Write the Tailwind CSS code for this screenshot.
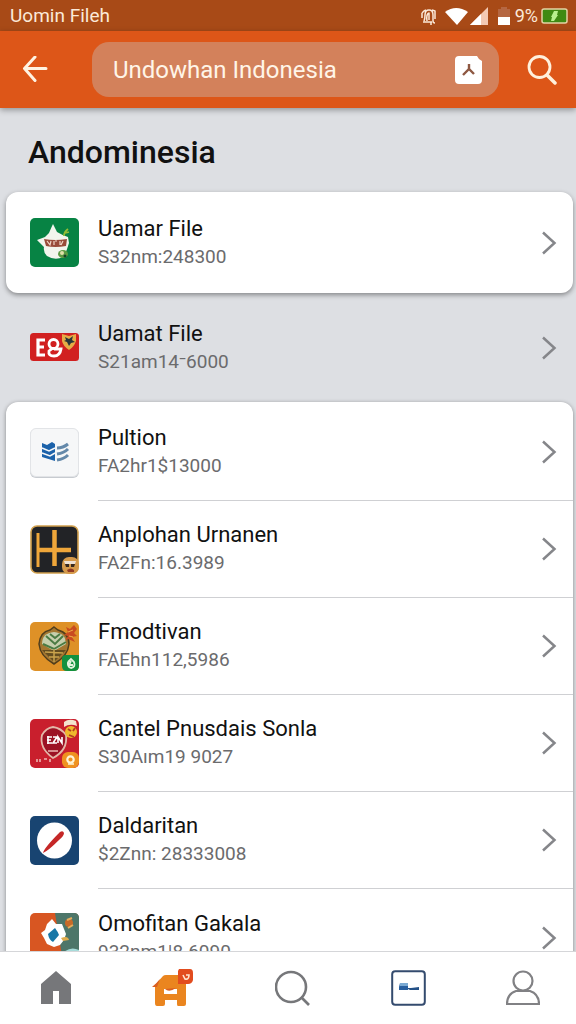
<!DOCTYPE html>
<html lang="id">
<head>
<meta charset="utf-8">
<meta name="viewport" content="width=device-width, initial-scale=1">
<title>Andominesia</title>
<script src="https://cdn.jsdelivr.net/npm/@tailwindcss/browser@4"></script>
</head>
<body class="flex h-screen flex-col overflow-hidden bg-[#dddfe3] font-['Roboto',sans-serif] text-[#111]">

<!-- Status bar -->
<div class="flex h-[31px] shrink-0 items-center justify-between bg-[#a84a17] pl-[10px] pr-2 text-[#fbe9d8]">
  <span class="text-[19px] leading-7">Uomin Fileh</span>
  <div class="flex items-center">
    <svg class="mr-[7px] h-5 w-[18px]" viewBox="0 0 18 20" fill="none" stroke="#fbe9d8" stroke-width="1.500" stroke-linejoin="round" aria-hidden="true"><path d="M4 15Q5 13 5 9Q5 4 9 4Q13 4 13 9V15Q13 17 15 17M3 16H12M7 15Q6 8 9 7V14M11 16V19M2 7L4 5L6 4M2 7V12M12 4L15 5V13"/></svg>
    <svg class="mr-0.5 h-5 w-[23px]" viewBox="0 0 23 20" fill="#fff" aria-hidden="true"><path d="M0 6Q11 -2 23 6L12 19Z"/></svg>
    <svg class="mr-2 h-5 w-[19px]" viewBox="0 0 19 20" aria-hidden="true"><path d="M0 19L18 1V19Z" fill="#f3c9b3"/><path d="M0 19L11 8V19Z" fill="#fff"/></svg>
    <svg class="mr-1 h-5 w-[14px]" viewBox="0 0 14 20" aria-hidden="true"><path d="M1 3h3V1h6v2h3v8H1z" fill="#b56742"/><path d="M1 11h12v8H1z" fill="#fff"/></svg>
    <span class="mr-[3px] text-[18px] leading-7">9%</span>
    <svg class="h-[18px] w-[27px]" viewBox="0 0 27 18" aria-hidden="true"><rect x="1" y="2" width="25" height="14" rx="2" fill="#3f8a12" stroke="#e3d3a5" stroke-width="1.500"/><path d="M13 4h4l-1 4h1l-4 6h-3l1-4h-1z" fill="#b9f08d"/></svg>
  </div>
</div>

<!-- App bar -->
<header class="z-10 flex h-[77px] shrink-0 items-center bg-[#dd5618] shadow-[0_2px_6px_rgba(0,0,0,0.35)]">
  <button type="button" aria-label="Kembali" class="flex h-14 w-[92px] items-center pl-[22px]">
    <svg class="h-7 w-[26px]" viewBox="0 0 26 28" fill="none" stroke="#fff3e2" stroke-width="3" stroke-linecap="round" stroke-linejoin="round" aria-hidden="true"><path d="M13 1L2.500 12.500L13 24.500M2.500 12.500H24"/></svg>
  </button>
  <div class="flex h-[55px] min-w-0 flex-1 items-center rounded-[17px] bg-[#d3815b] pl-[21px] pr-4">
    <input type="text" aria-label="Cari" value="Undowhan Indonesia" class="min-w-0 flex-1 bg-transparent text-[24px] leading-8 text-[#fff5e8] outline-none">
    <button type="button" aria-label="Mode input" class="shrink-0">
      <svg class="h-7 w-7" viewBox="0 0 28 28" aria-hidden="true"><path d="M4 0H22L24 3L27 5V24Q27 28 23 28H4Q0 28 0 24V4Q0 0 4 0Z" fill="#fff"/><path d="M8 19L14 13L19 18M14 13V8" fill="none" stroke="#8e5842" stroke-width="2.400"/></svg>
    </button>
  </div>
  <button type="button" aria-label="Telusuri" class="flex h-14 w-[77px] items-center justify-center pl-2">
    <svg class="h-[30px] w-[30px]" viewBox="0 0 30 30" fill="none" stroke="#fff0dc" stroke-width="2.800" stroke-linecap="round" aria-hidden="true"><circle cx="12.500" cy="12" r="10.500"/><path d="M20 20L28 28" stroke-width="3.500"/></svg>
  </button>
</header>

<main class="min-h-0 flex-1 overflow-hidden pl-[6px] pr-[3px]">
  <h1 class="flex h-[84px] items-center pl-[22px] pt-[3px] text-[32px] font-medium leading-10">Andominesia</h1>

  <a href="#" class="flex h-[101px] items-center rounded-xl bg-white pl-6 pr-4 shadow-[0_2px_5px_rgba(0,0,0,0.4)]">
    <svg class="mr-[19px] h-[49px] w-[49px] shrink-0" viewBox="0 0 49 49" aria-hidden="true"><rect width="49" height="49" rx="5" fill="#078344"/><path d="M7 22L15 19L19 15Q21 10 23 6L27 14Q32 17 38 19L39 25Q37 33 33 39Q25 43 17 38Q13 34 14 29Z" fill="#f2f5ed"/><path d="M14 21Q25 23 37 21L36 28Q25 30 16 28Z" fill="#994c3a"/><path d="M17 23l3 4 1-4m3 0v4m3-4h-2m5 0v4m3-4l-2 4" fill="none" stroke="#f1d7c9" stroke-width="1.200"/><path d="M34 18q0-4 4-7M35 15l4-1" fill="none" stroke="#94bd36" stroke-width="1.800"/><ellipse cx="33" cy="36" rx="5" ry="4" fill="#5d9a43"/><circle cx="32" cy="35" r="2" fill="#e0dfaa"/><circle cx="35" cy="38" r="1.500" fill="#17412a"/></svg>
    <span class="flex flex-1 flex-col"><span class="text-[22px] leading-7">Uamar File</span><span class="text-[19px] leading-7 text-[#6b6b6d]">S32nm:248300</span></span>
    <svg class="h-6 w-4" viewBox="0 0 16 24" fill="none" stroke="#85868a" stroke-width="2.500" aria-hidden="true"><path d="M2 1.500L13.500 12L2 22.500"/></svg>
  </a>

  <a href="#" class="flex h-[109px] items-center pl-6 pr-4">
    <svg class="mr-[19px] h-[49px] w-[49px] shrink-0" viewBox="0 0 49 49" aria-hidden="true"><rect y="10" width="49" height="28" rx="3.500" fill="#d12020"/><path d="M15 17H8V32H15M8 24H14" fill="none" stroke="#fff" stroke-width="3.200"/><circle cx="23.500" cy="21" r="4.500" fill="none" stroke="#fff" stroke-width="2.800"/><path d="M24 26H31Q30 33 24 33Q18 33 19 28L23 25" fill="none" stroke="#fff" stroke-width="2.800"/><path d="M32 11L39 13L46 11V18Q44 24 39 27Q33 23 32 18Z" fill="#e6ac46"/><path d="M35 14l4 2 4-3-1 4 3 2-4 1-2 3-2-4-3-1 2-1z" fill="#28363b"/></svg>
    <span class="flex flex-1 flex-col"><span class="text-[22px] leading-7">Uamat File</span><span class="text-[19px] leading-7 text-[#6b6b6d]">S21am14&#8315;6000</span></span>
    <svg class="h-6 w-4" viewBox="0 0 16 24" fill="none" stroke="#85868a" stroke-width="2.500" aria-hidden="true"><path d="M2 1.500L13.500 12L2 22.500"/></svg>
  </a>

  <ul class="rounded-t-xl bg-white pt-[2px] shadow-[0_1px_4px_rgba(0,0,0,0.4)]">
    <li class="h-[97px] pl-6">
      <a href="#" class="flex h-full items-center">
        <svg class="mr-[19px] h-[49px] w-[49px] shrink-0 overflow-visible" viewBox="0 0 49 49" aria-hidden="true"><rect x="0" y="1" width="49" height="49" rx="6" fill="#c7cbd0"/><rect x=".5" y=".5" width="48" height="48" rx="5.500" fill="#f6f7f8" stroke="#e2e4e7"/><path d="M12 15L17 17L22 14L25 16V33L12 29Z" fill="#1c62aa"/><path d="M12 20L19 23L25 20M12 25L20 28L25 25" fill="none" stroke="#f6f7f8" stroke-width="1.500"/><path d="M27 20Q33 20 38 16M27 26Q34 25 38 21M27 32Q34 31 38 27" fill="none" stroke="#6489aa" stroke-width="3"/></svg>
        <span class="flex h-full flex-1 items-center border-b border-[#cfd0d3] pr-4"><span class="flex flex-1 flex-col"><span class="text-[22px] leading-7">Pultion</span><span class="text-[19px] leading-7 text-[#6b6b6d]">FA2hr1$13000</span></span>
        <svg class="h-6 w-4" viewBox="0 0 16 24" fill="none" stroke="#85868a" stroke-width="2.500" aria-hidden="true"><path d="M2 1.500L13.500 12L2 22.500"/></svg></span>
      </a>
    </li>
    <li class="h-[97px] pl-6">
      <a href="#" class="flex h-full items-center">
        <svg class="mr-[19px] h-[49px] w-[49px] shrink-0" viewBox="0 0 49 49" aria-hidden="true"><rect x="1" y="1" width="47" height="47" rx="6" fill="#222326" stroke="#d1a04e" stroke-width="1.600"/><path d="M8 8V42" stroke="#efa63a" stroke-width="3"/><path d="M24.500 5V41M8 25H41" fill="none" stroke="#efa63a" stroke-width="4.500"/><rect x="32" y="32" width="17" height="17" rx="7" fill="#d69a4a"/><path d="M34 36h12l-1 3H35z" fill="#eee1d3"/><path d="M35 39h4v3h-3zm6 0h4l-1 3h-3z" fill="#38291f"/><path d="M37 45q4-3 7 0v2h-6z" fill="#913a25"/></svg>
        <span class="flex h-full flex-1 items-center border-b border-[#cfd0d3] pr-4"><span class="flex flex-1 flex-col"><span class="text-[22px] leading-7">Anplohan Urnanen</span><span class="text-[19px] leading-7 text-[#6b6b6d]">FA2Fn:16.3989</span></span>
        <svg class="h-6 w-4" viewBox="0 0 16 24" fill="none" stroke="#85868a" stroke-width="2.500" aria-hidden="true"><path d="M2 1.500L13.500 12L2 22.500"/></svg></span>
      </a>
    </li>
    <li class="h-[97px] pl-6">
      <a href="#" class="flex h-full items-center">
        <svg class="mr-[19px] h-[49px] w-[49px] shrink-0" viewBox="0 0 49 49" aria-hidden="true"><rect width="49" height="49" rx="5" fill="#de9127"/><path d="M24 5L28 8Q39 11 39 22Q38 34 24 42Q10 34 9 22Q10 10 20 8Z" fill="#a47731" stroke="#513e1c" stroke-width="1.500"/><path d="M12 22Q12 11 24 10Q36 11 36 22L24 29Z" fill="#c6cfad"/><path d="M16 14L25 22L33 14M13 22L24 27L36 20M20 12l5 4 5-4" fill="none" stroke="#4b7b43" stroke-width="2"/><path d="M12 28L36 28L24 40Z" fill="#644d20"/><path d="M15 30l18 1M19 35h10M24 27v13" stroke="#c9a34c" stroke-width="1.500"/><path d="M36 5l4 2 4-4 3 4-3 4 3 3-5 1 3 5-7-3-3 2 3-5-4-1 4-3z" fill="#c94c20"/><path d="M38 10l5-2m-4 6l4 1" stroke="#efac49"/><path d="M32 37Q32 33 36 33H49V44Q49 49 44 49H37Q32 49 32 44Z" fill="#13913f"/><path d="M38 40L41 37L44 40Q46 45 41 46Q37 45 38 40M41 39L39 43H43" fill="none" stroke="#e2f4dd" stroke-width="1.800"/></svg>
        <span class="flex h-full flex-1 items-center border-b border-[#cfd0d3] pr-4"><span class="flex flex-1 flex-col"><span class="text-[22px] leading-7">Fmodtivan</span><span class="text-[19px] leading-7 text-[#6b6b6d]">FAEhn112,5986</span></span>
        <svg class="h-6 w-4" viewBox="0 0 16 24" fill="none" stroke="#85868a" stroke-width="2.500" aria-hidden="true"><path d="M2 1.500L13.500 12L2 22.500"/></svg></span>
      </a>
    </li>
    <li class="h-[97px] pl-6">
      <a href="#" class="flex h-full items-center">
        <svg class="mr-[19px] h-[49px] w-[49px] shrink-0" viewBox="0 0 49 49" aria-hidden="true"><rect width="49" height="49" rx="5" fill="#c91f2d"/><path d="M23 8Q31 9 36 16Q38 31 23 39Q9 29 12 16Q16 9 23 8Z" fill="#9c1224" stroke="#e3b8a9" stroke-width="1.800"/><path d="M17 18H22M17 21H21M17 24H22M18 17V25M23 18H27L23 24H27M28 24V18L32 24V18" fill="none" stroke="#fff" stroke-width="1.600"/><path d="M18 32h10M7 40v3m3-3v3m4-3h3m3 0v3" stroke="#edb6b1" stroke-width="1.600"/><circle cx="41" cy="13" r="6" fill="#efb92d"/><path d="M34 3q5-4 12-1l1 5q-7-3-13 1z" fill="#f4e4cf"/><path d="M38 10l3 2m4-3-2 3m-4 4 5 2" stroke="#b13e20" stroke-width="1.800"/><rect x="32" y="33" width="17" height="16" rx="6" fill="#ef9220"/><circle cx="40.500" cy="40.500" r="3.200" fill="none" stroke="#fff3d6" stroke-width="2.200"/><path d="M38 45H44" stroke="#fff3d6" stroke-width="1.500"/></svg>
        <span class="flex h-full flex-1 items-center border-b border-[#cfd0d3] pr-4"><span class="flex flex-1 flex-col"><span class="text-[22px] leading-7">Cantel Pnusdais Sonla</span><span class="text-[19px] leading-7 text-[#6b6b6d]">S30Aım19 9027</span></span>
        <svg class="h-6 w-4" viewBox="0 0 16 24" fill="none" stroke="#85868a" stroke-width="2.500" aria-hidden="true"><path d="M2 1.500L13.500 12L2 22.500"/></svg></span>
      </a>
    </li>
    <li class="h-[97px] pl-6">
      <a href="#" class="flex h-full items-center">
        <svg class="mr-[19px] h-[49px] w-[49px] shrink-0" viewBox="0 0 49 49" aria-hidden="true"><rect width="49" height="49" rx="5" fill="#184471"/><ellipse cx="24.500" cy="24.500" rx="17.500" ry="18" fill="#fff"/><path d="M13 37Q14 32 30 16Q33 14 34 17Q34 20 29 24Q18 35 13 37Z" fill="#c52727"/></svg>
        <span class="flex h-full flex-1 items-center border-b border-[#cfd0d3] pr-4"><span class="flex flex-1 flex-col"><span class="text-[22px] leading-7">Daldaritan</span><span class="text-[19px] leading-7 text-[#6b6b6d]">$2Znn: 28333008</span></span>
        <svg class="h-6 w-4" viewBox="0 0 16 24" fill="none" stroke="#85868a" stroke-width="2.500" aria-hidden="true"><path d="M2 1.500L13.500 12L2 22.500"/></svg></span>
      </a>
    </li>
    <li class="h-[97px] pl-6">
      <a href="#" class="flex h-full items-center">
        <svg class="mr-[19px] h-[49px] w-[49px] shrink-0" viewBox="0 0 49 49" aria-hidden="true"><rect width="49" height="49" rx="5" fill="#d85622"/><path d="M25 0H44Q49 0 49 5V44Q49 49 44 49H33Z" fill="#4d7669"/><path d="M22 6l4 5 6 0 2 5 2 5-2 6-4 5-6 2-7-3-3-6-3-5 4-3 2-6z" fill="#fff"/><path d="M18 21L25 15Q28 19 29 22L23 29Q19 27 18 21Z" fill="#1777a7"/><circle cx="39" cy="10" r="4" fill="#c86a28"/><path d="M37 7l5-2m-4 10 5-3" stroke="#e5ad5c" stroke-width="2"/><path d="M31 25q7-3 8 2l-6 1z" fill="#dfac4c"/><path d="M34 39q7-6 15-2v7q0 5-5 5H34z" fill="#a7dcda"/></svg>
        <span class="flex h-full flex-1 items-center pr-4"><span class="flex flex-1 flex-col"><span class="text-[22px] leading-7">Omofitan Gakala</span><span class="text-[19px] leading-7 text-[#6b6b6d]">932nm1|8.6090</span></span>
        <svg class="h-6 w-4" viewBox="0 0 16 24" fill="none" stroke="#85868a" stroke-width="2.500" aria-hidden="true"><path d="M2 1.500L13.500 12L2 22.500"/></svg></span>
      </a>
    </li>
  </ul>
</main>

<!-- Bottom navigation -->
<nav class="z-10 flex h-[73px] shrink-0 items-center justify-between border-t border-[#d5d6d9] bg-white px-9">
  <a href="#" aria-label="Beranda" class="p-1">
    <svg class="h-9 w-8" viewBox="0 0 32 36" aria-hidden="true"><path d="M16 1L31 14V34H19V21H13V34H1V14Z" fill="#76777a"/></svg>
  </a>
  <a href="#" aria-label="Toko" class="p-1">
    <svg class="h-10 w-[42px]" viewBox="0 0 42 40" aria-hidden="true"><path d="M3 17L11 8Q12 7 14 7H26V16H34V36Q34 38 32 38H26Q25 38 25 36V32H13V36Q13 38 11 38H5Q3 38 3 35Z" fill="#ea851f"/><path d="M12 21H25V26H12Z" fill="#fff"/><path d="M13 21Q17 25 24 20Z" fill="#d95f21"/><path d="M0 19Q5 15 8 11L5 19Z" fill="#d95f21"/><path d="M27 1H38Q41 1 41 5V12Q40 16 36 16H26V3Z" fill="#e24c1e"/><path d="M31 7l2 4q4 1 4-4h-3" fill="none" stroke="#ffe4cf" stroke-width="1.600"/></svg>
  </a>
  <a href="#" aria-label="Cari" class="p-1">
    <svg class="h-9 w-9" viewBox="0 0 36 36" fill="none" stroke="#76777a" stroke-width="2.600" aria-hidden="true"><circle cx="16" cy="17" r="15"/><path d="M26 27L34 35"/></svg>
  </a>
  <a href="#" aria-label="Kartu" class="p-1">
    <svg class="h-9 w-[35px]" viewBox="0 0 35 36" aria-hidden="true"><rect x="1.200" y="1.200" width="32.600" height="33.600" rx="3" fill="none" stroke="#344b6e" stroke-width="2"/><path d="M9 13H17V20H8V17Z" fill="#285f9f"/><path d="M9 13h8v3H9z" fill="#7baad3"/><path d="M17 18H20L28 17V20H19L17 19Z" fill="#245187"/></svg>
  </a>
  <a href="#" aria-label="Profil" class="-mr-1 p-1">
    <svg class="h-9 w-[34px]" viewBox="0 0 34 36" fill="none" stroke="#818184" stroke-width="2.200" aria-hidden="true"><circle cx="17" cy="11" r="9.500"/><path d="M10 21H24Q33 24 33 34H1Q1 24 10 21Z"/></svg>
  </a>
</nav>
</body>
</html>
